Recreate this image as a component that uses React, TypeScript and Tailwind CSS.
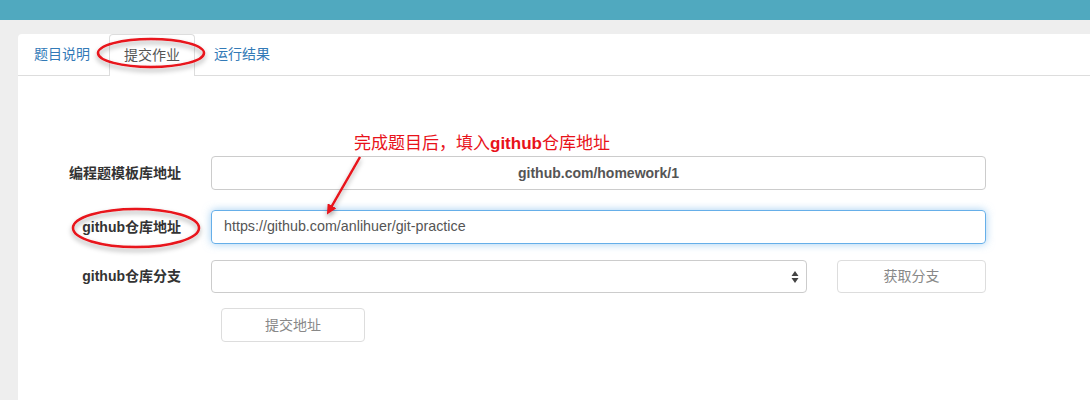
const font = { fontFamily: '"Liberation Sans", "Noto Sans CJK SC", sans-serif' }

const FormRow = ({ label, children, className = '' }: { label: string; children: React.ReactNode; className?: string }) => (
  <div className={`flex items-center ${className}`}>
    <label className="w-[163px] shrink-0 text-right text-[14px] font-bold text-[#333]">{label}</label>
    <div className="ml-[30px] flex items-center">{children}</div>
  </div>
)

const Annotations = () => (
  <svg className="pointer-events-none absolute left-0 top-0" width="1090" height="400">
    <defs>
      <filter id="sh" x="-20%" y="-20%" width="140%" height="160%">
        <feDropShadow dx="0" dy="3" stdDeviation="2.5" floodColor="#000" floodOpacity="0.35" />
      </filter>
      <marker id="head" markerWidth="10" markerHeight="10" refX="6" refY="5" orient="auto" markerUnits="userSpaceOnUse">
        <path d="M0,0 L10,5 L0,10 Z" fill="#e8121a" />
      </marker>
    </defs>
    <g filter="url(#sh)" fill="none" stroke="#e8121a" strokeWidth="2.5">
      <ellipse cx="151" cy="53" rx="53" ry="14" />
      <ellipse cx="136" cy="228" rx="63" ry="19" />
      <line x1="360" y1="157" x2="329" y2="211" markerEnd="url(#head)" />
    </g>
  </svg>
)

export default function App() {
  return (
    <div className="relative h-[400px] w-[1090px] overflow-hidden bg-[#eeeeee]" style={font}>
      <div className="h-[20px] bg-[#50a9bf]" />
      <div className="ml-[18px] mt-[14px] h-[400px] rounded-tl-[4px] bg-white">
        {/* Tabs */}
        <div className="flex h-[42px] border-b border-[#dddddd] text-[14px]">
          <div className="mr-[3px] flex items-center px-[16px] text-[#337ab7]">题目说明</div>
          <div className="-mb-px flex w-[86px] items-center justify-center rounded-t-[4px] border border-b-0 border-[#dddddd] bg-white text-[#555]">
            提交作业
          </div>
          <div className="ml-[3px] flex items-center px-[16px] text-[#337ab7]">运行结果</div>
        </div>

        {/* Form */}
        <div className="pt-[80px]">
          <FormRow label="编程题模板库地址">
            <div className="flex h-[34px] w-[775px] items-center justify-center rounded-[4px] border border-[#cccccc] text-[14px] font-bold text-[#555]">
              github.com/homework/1
            </div>
          </FormRow>
          <FormRow label="github仓库地址" className="mt-[20px]">
            <div className="flex h-[34px] w-[775px] items-center rounded-[4px] border border-[#66afe9] px-[12px] text-[14.3px] text-[#555] shadow-[0_0_8px_rgba(102,175,233,0.6)]">
              https://github.com/anlihuer/git-practice
            </div>
          </FormRow>
          <FormRow label="github仓库分支" className="mt-[16px]">
            <div className="flex h-[33px] w-[596px] items-center justify-end rounded-[4px] border border-[#cccccc] pr-[7px]">
              <svg width="8" height="14" viewBox="0 0 8 14">
                <path d="M4,1 L7.5,6 L0.5,6 Z M4,13 L7.5,8 L0.5,8 Z" fill="#444" />
              </svg>
            </div>
            <button className="ml-[30px] h-[33px] w-[149px] rounded-[4px] border border-[#dddddd] text-[14px] text-[#888]">
              获取分支
            </button>
          </FormRow>
          <button className="ml-[203px] mt-[15px] h-[34px] w-[144px] rounded-[4px] border border-[#dddddd] text-[14px] text-[#888]">
            提交地址
          </button>
        </div>
      </div>

      <Annotations />
      <div className="absolute left-[354px] top-[132px] text-[17px] leading-[24px] text-[#e8121a]">
        完成题目后，填入<span className="font-bold">github</span>仓库地址
      </div>
    </div>
  )
}
